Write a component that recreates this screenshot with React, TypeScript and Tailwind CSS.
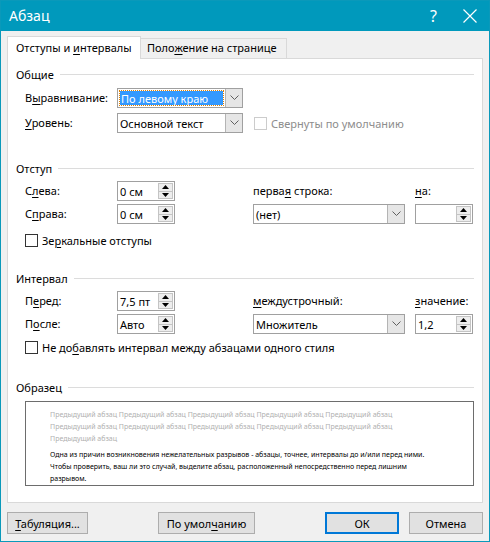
import type { ReactNode } from "react";

const font = "font-['Segoe_UI','Noto_Sans',sans-serif]";

function Key({ children }: { children: ReactNode }) {
  return <span className="underline underline-offset-2">{children}</span>;
}

function Heading({ children }: { children: ReactNode }) {
  return (
    <div className="flex h-[16px] items-center gap-[6px]">
      <span className="leading-none">{children}</span>
      <div className="h-px flex-1 bg-[#dcdcdc]" />
    </div>
  );
}

function Chevron() {
  return (
    <svg width="9" height="6" viewBox="0 0 9 6" fill="none">
      <path d="M0.5 0.5 L4.5 4.5 L8.5 0.5" stroke="#606060" strokeWidth="1" />
    </svg>
  );
}

function Select({ value, className, focused }: { value: string; className: string; focused?: boolean }) {
  return (
    <div className={`flex h-[20px] border border-[#a0a0a0] bg-white ${className}`}>
      <div className="flex min-w-0 flex-1 items-center px-[2px]">
        {focused ? (
          <span className="flex h-[14px] w-full items-center bg-[#3399ff] pl-[1px] leading-none text-white outline-1 outline-dotted outline-[#e08000]">
            {value}
          </span>
        ) : (
          <span className="leading-none">{value}</span>
        )}
      </div>
      <div className="flex w-[17px] items-center justify-center border-l border-[#b4b4b4] bg-[#e6e6e6]">
        <Chevron />
      </div>
    </div>
  );
}

function Tri({ up }: { up?: boolean }) {
  return (
    <svg width="7" height="4" viewBox="0 0 7 4">
      <path d={up ? "M3.5 0 L7 4 L0 4 Z" : "M0 0 L7 0 L3.5 4 Z"} fill="#000" />
    </svg>
  );
}

function Spin({ value }: { value: string }) {
  return (
    <div className="flex h-[20px] w-[58px] border border-[#a0a0a0] bg-white">
      <div className="flex flex-1 items-center pl-[2px] leading-none">{value}</div>
      <div className="my-[1px] mr-[1px] flex w-[15px] flex-col border border-[#c4c4c4] bg-[#ededed]">
        <div className="flex flex-1 items-center justify-center border-b border-[#c4c4c4]">
          <Tri up />
        </div>
        <div className="flex flex-1 items-center justify-center">
          <Tri />
        </div>
      </div>
    </div>
  );
}

function Check({ children, disabled }: { children: ReactNode; disabled?: boolean }) {
  return (
    <div className="flex h-[16px] items-center gap-[4px]">
      <div className={`h-[13px] w-[13px] shrink-0 border bg-white ${disabled ? "border-[#cccccc]" : "border-[#333333]"}`} />
      <span className={`leading-none ${disabled ? "text-[#8d8d8d]" : ""}`}>{children}</span>
    </div>
  );
}

function Button({ children, className, primary }: { children: ReactNode; className: string; primary?: boolean }) {
  return (
    <div
      className={`flex h-[22px] items-center justify-center bg-[#e1e1e1] leading-none ${
        primary ? "border-2 border-[#0078d7]" : "border border-[#adadad]"
      } ${className}`}
    >
      {children}
    </div>
  );
}

const grid = "grid grid-cols-[92px_136px_162px_58px] items-center";

export default function App() {
  return (
    <div
      className={`flex h-[542px] w-[490px] flex-col whitespace-nowrap border border-[#0a99ba] bg-[#f0f0f0] text-[11px] text-black ${font}`}
    >
      <div className="flex h-[30px] shrink-0 items-center bg-[#0099bc] text-white">
        <span className="pl-[8px] text-[14px] leading-none">Абзац</span>
        <span className="ml-auto mr-[26px] text-[16px] leading-none">?</span>
        <svg className="mr-[12px]" width="14" height="14" viewBox="0 0 14 14">
          <path d="M0.5 0.5 L13.5 13.5 M13.5 0.5 L0.5 13.5" stroke="#fff" strokeWidth="1.2" />
        </svg>
      </div>

      <div className="flex flex-1 flex-col px-[6px]">
        <div className="mt-[4px] flex h-[23px] items-end">
          <div className="relative z-10 -mb-px flex h-[23px] w-[134px] items-center border border-b-0 border-[#d9d9d9] bg-white pl-[8px]">
            <span>
              Отступы и <Key>и</Key>нтервалы
            </span>
          </div>
          <div className="flex h-[20px] w-[146px] items-center border border-l-0 border-b-0 border-[#d9d9d9] bg-[#f0f0f0] pl-[6px]">
            <span>
              Поло<Key>ж</Key>ение на странице
            </span>
          </div>
        </div>

        <div className="flex h-[445px] flex-col border border-[#d9d9d9] bg-white px-[8px]">
          <div className="mt-[7px]">
            <Heading>Общие</Heading>
          </div>
          <div className="mt-[6px] flex flex-col gap-[5px] pl-[9px]">
            <div className={grid}>
              <span>
                В<Key>ы</Key>равнивание:
              </span>
              <Select value="По левому краю" className="w-[126px]" focused />
            </div>
            <div className={grid}>
              <span>
                <Key>У</Key>ровень:
              </span>
              <Select value="Основной текст" className="w-[126px]" />
              <div className="pl-[1px]">
                <Check disabled>Свернуты по умолчанию</Check>
              </div>
            </div>
          </div>

          <div className="mt-[27px]">
            <Heading>Отступ</Heading>
          </div>
          <div className="mt-[5px] flex flex-col gap-[3px] pl-[9px]">
            <div className={grid}>
              <span>
                С<Key>л</Key>ева:
              </span>
              <Spin value="0 см" />
              <span>
                перва<Key>я</Key> строка:
              </span>
              <span>
                <Key>н</Key>а:
              </span>
            </div>
            <div className={grid}>
              <span>
                С<Key>п</Key>рава:
              </span>
              <Spin value="0 см" />
              <Select value="(нет)" className="w-[152px]" />
              <Spin value="" />
            </div>
          </div>
          <div className="mt-[8px] pl-[9px]">
            <Check>
              Зе<Key>р</Key>кальные отступы
            </Check>
          </div>

          <div className="mt-[22px]">
            <Heading>Интервал</Heading>
          </div>
          <div className="mt-[5px] flex flex-col gap-[3px] pl-[9px]">
            <div className={grid}>
              <span>
                П<Key>е</Key>ред:
              </span>
              <Spin value="7,5 пт" />
              <span>
                <Key>м</Key>еждустрочный:
              </span>
              <span>
                <Key>з</Key>начение:
              </span>
            </div>
            <div className={grid}>
              <span>
                П<Key>о</Key>сле:
              </span>
              <Spin value="Авто" />
              <Select value="Множитель" className="w-[152px]" />
              <Spin value="1,2" />
            </div>
          </div>
          <div className="mt-[5px] pl-[9px]">
            <Check>
              Не до<Key>б</Key>авлять интервал между абзацами одного стиля
            </Check>
          </div>

          <div className="mt-[24px]">
            <Heading>Образец</Heading>
          </div>
          <div className="ml-[9px] mt-[6px] h-[85px] border border-[#6d6d6d] bg-white pl-[24px] pt-[7px] text-[7px] leading-[12px]">
            <div className="text-[#b0b0b0]">
              Предыдущий абзац Предыдущий абзац Предыдущий абзац Предыдущий абзац Предыдущий абзац
              <br />
              Предыдущий абзац Предыдущий абзац Предыдущий абзац Предыдущий абзац Предыдущий абзац
              <br />
              Предыдущий абзац
            </div>
            <div className="mt-[4px]">
              Одна из причин возникновения нежелательных разрывов - абзацы, точнее, интервалы до и/или перед ними.
              <br />
              Чтобы проверить, ваш ли это случай, выделите абзац, расположенный непосредственно перед лишним
              <br />
              разрывом.
            </div>
          </div>
        </div>

        <div className="mt-[9px] flex items-center">
          <Button className="w-[81px]">
            <span>
              <Key>Т</Key>абуляция...
            </span>
          </Button>
          <Button className="ml-[70px] w-[97px]">
            <span>
              По умол<Key>ч</Key>анию
            </span>
          </Button>
          <Button className="ml-auto w-[74px]" primary>
            ОК
          </Button>
          <Button className="ml-[10px] w-[74px]">Отмена</Button>
        </div>
      </div>
    </div>
  );
}
